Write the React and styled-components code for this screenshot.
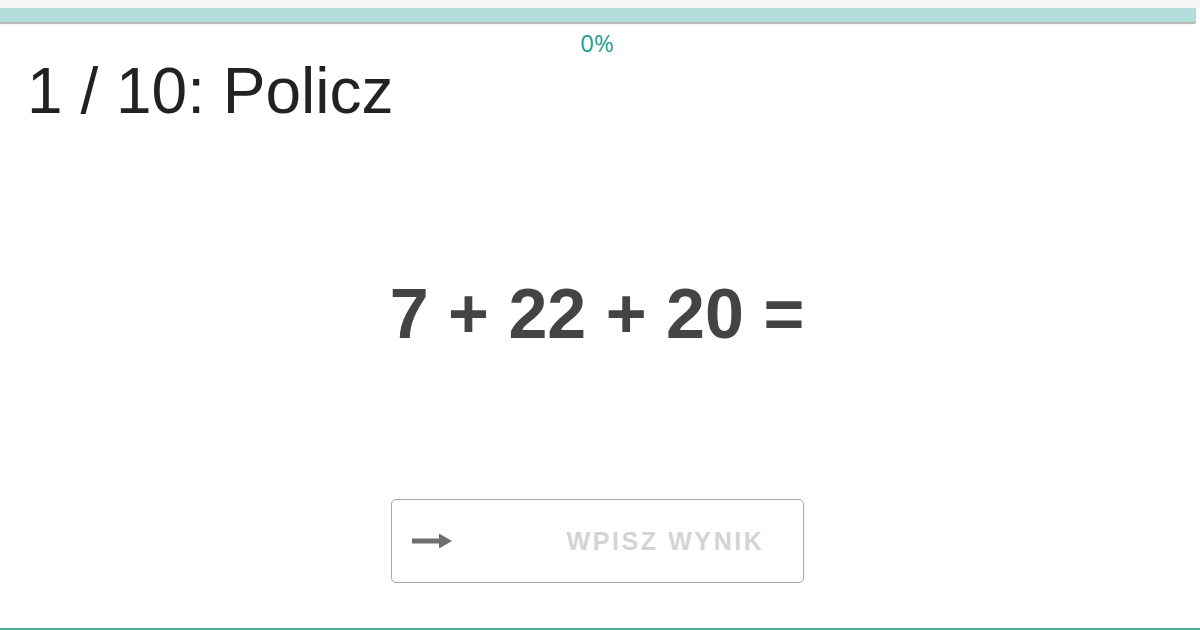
import styled, { createGlobalStyle } from 'styled-components';

const GlobalStyle = createGlobalStyle`
  html, body {
    margin: 0;
    padding: 0;
    background: #fff;
  }
  body {
    font-family: "Liberation Sans", Arial, sans-serif;
  }
`;

const Page = styled.div`
  width: 1200px;
  height: 630px;
  box-sizing: border-box;
  display: flex;
  flex-direction: column;
  background: #fff;
  border-bottom: 2px solid #4caf93;
  overflow: hidden;
`;

const TopStrip = styled.div`
  height: 8px;
  background: #f6f6f6;
`;

const ProgressTrack = styled.div`
  height: 14px;
  margin-right: 4px;
  background: #b2dfdb;
  box-shadow: 0 2px 1px rgba(120, 120, 120, 0.55);
  border-bottom-right-radius: 2px;
`;

const Content = styled.div`
  display: flex;
  flex-direction: column;
  padding-right: 6px;
`;

const Percent = styled.div`
  text-align: center;
  margin-top: 8px;
  height: 26px;
  font-family: "Open Sans", sans-serif;
  font-size: 24px;
  line-height: 26px;
  font-weight: 400;
  color: #1f9d8d;
`;

const Title = styled.h1`
  margin: 0;
  margin-top: -5px;
  padding-left: 27px;
  font-family: "Liberation Sans", Arial, sans-serif;
  font-weight: 400;
  font-size: 64px;
  line-height: 80px;
  color: #222;
`;

const Equation = styled.div`
  margin-top: 143px;
  text-align: center;
  font-family: "Liberation Sans", Arial, sans-serif;
  font-weight: 700;
  font-size: 70px;
  line-height: 80px;
  color: #444;
`;

const AnswerRow = styled.div`
  display: flex;
  justify-content: center;
  margin-top: 145px;
`;

const AnswerBox = styled.label`
  width: 413px;
  height: 84px;
  box-sizing: border-box;
  border: 1.5px solid #a8a8a8;
  border-radius: 5px;
  display: flex;
  align-items: center;
  padding: 0 36px 0 20px;
  gap: 20px;
`;

const AnswerInput = styled.input`
  flex: 1;
  min-width: 0;
  border: none;
  outline: none;
  background: transparent;
  text-align: right;
  font-family: "Liberation Sans", Arial, sans-serif;
  font-size: 25px;
  font-weight: 700;
  letter-spacing: 2.6px;
  color: #333;

  &::placeholder {
    color: #d4d4d4;
    text-transform: uppercase;
  }
`;

function Arrow() {
  return (
    <svg width="40" height="16" viewBox="0 0 40 16">
      <rect x="0" y="5.5" width="30" height="5" fill="#6f6f6f" />
      <polygon points="27,0.5 40,8 27,15.5" fill="#6f6f6f" />
    </svg>
  );
}

export default function App() {
  return (
    <>
      <GlobalStyle />
      <Page>
        <TopStrip />
        <ProgressTrack />
        <Content>
          <Percent>0%</Percent>
          <Title>1 / 10: Policz</Title>
          <Equation>7 + 22 + 20 =</Equation>
          <AnswerRow>
            <AnswerBox>
              <Arrow />
              <AnswerInput placeholder="Wpisz wynik" />
            </AnswerBox>
          </AnswerRow>
        </Content>
      </Page>
    </>
  );
}
